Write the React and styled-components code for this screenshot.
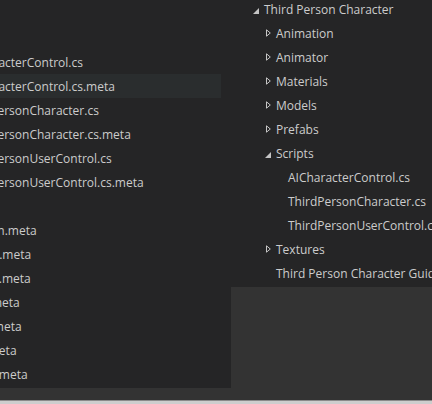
import React from 'react';
import styled, { createGlobalStyle } from 'styled-components';

const GlobalStyle = createGlobalStyle`
  html, body {
    margin: 0;
    padding: 0;
    background: #333333;
  }
  body {
    font-family: "Open Sans", "Noto Sans", sans-serif;
    font-size: 12px;
    color: #cccccc;
  }
`;

const Page = styled.div`
  width: 432px;
  height: 404px;
  overflow: hidden;
  display: flex;
  flex-direction: column;
  background: #333333;
`;

const Desktop = styled.div`
  flex: 1;
  display: flex;
  align-items: flex-start;
`;

const Strip = styled.div`
  height: 3px;
  border-top: 1px solid #8a8a8a;
  background: #cdcdcd;
`;

const FilePanel = styled.div`
  width: 231px;
  height: 388px;
  box-sizing: border-box;
  padding: 2px 10px 0 0;
  background: #252526;
  overflow: hidden;
`;

const FileRow = styled.div`
  height: 24px;
  display: flex;
  align-items: center;
  white-space: nowrap;
  background: ${props => (props.selected ? '#2a2d2e' : 'transparent')};
`;

const FileName = styled.span`
  margin-left: ${props => props.indent}px;
`;

const TreePanel = styled.div`
  width: 201px;
  height: 287px;
  background: #252526;
  overflow: hidden;
`;

const Tree = styled.div`
  margin-top: -3px;
`;

const TreeRow = styled.div`
  height: 24px;
  display: flex;
  align-items: center;
  white-space: nowrap;
  padding-left: ${props => 17 + props.level * 12}px;
`;

const Twisty = styled.span`
  width: 16px;
  height: 24px;
  flex: none;
  display: flex;
  align-items: center;
  justify-content: center;
`;

const Label = styled.span`
  overflow: visible;
`;

const Expanded = () => (
  <svg width="6" height="6" viewBox="0 0 6 6" style={{ marginTop: 3 }}>
    <path d="M6 0 L6 6 L0 6 Z" fill="#c5c5c5" />
  </svg>
);

const Collapsed = () => (
  <svg width="5" height="8" viewBox="0 0 5 8">
    <path d="M0.5 0.8 L4.3 4 L0.5 7.2 Z" fill="none" stroke="#c5c5c5" strokeWidth="1" />
  </svg>
);

// the file list belongs to a window that runs off the left edge,
// so names start left of the visible area
const files = [
  { name: '', indent: 0 },
  { name: '', indent: 0 },
  { name: 'AICharacterControl.cs', indent: -39 },
  { name: 'AICharacterControl.cs.meta', indent: -39, selected: true },
  { name: 'ThirdPersonCharacter.cs', indent: -39 },
  { name: 'ThirdPersonCharacter.cs.meta', indent: -39 },
  { name: 'ThirdPersonUserControl.cs', indent: -39 },
  { name: 'ThirdPersonUserControl.cs.meta', indent: -39 },
  { name: '', indent: 0 },
  { name: 'Animation.meta', indent: -53 },
  { name: 'Animator.meta', indent: -53 },
  { name: 'Materials.meta', indent: -53 },
  { name: 'Models.meta', indent: -53 },
  { name: 'Prefabs.meta', indent: -53 },
  { name: 'Scripts.meta', indent: -53 },
  { name: 'Textures.meta', indent: -53 },
];

const tree = [
  { name: 'Third Person Character', level: 0, open: true },
  { name: 'Animation', level: 1, open: false },
  { name: 'Animator', level: 1, open: false },
  { name: 'Materials', level: 1, open: false },
  { name: 'Models', level: 1, open: false },
  { name: 'Prefabs', level: 1, open: false },
  { name: 'Scripts', level: 1, open: true },
  { name: 'AICharacterControl.cs', level: 2 },
  { name: 'ThirdPersonCharacter.cs', level: 2 },
  { name: 'ThirdPersonUserControl.cs', level: 2 },
  { name: 'Textures', level: 1, open: false },
  { name: 'Third Person Character Guide.pdf', level: 1 },
];

export default function App() {
  return (
    <Page>
      <GlobalStyle />
      <Desktop>
        <FilePanel>
          {files.map((f, i) => (
            <FileRow key={i} selected={f.selected}>
              <FileName indent={f.indent}>{f.name}</FileName>
            </FileRow>
          ))}
        </FilePanel>
        <TreePanel>
          <Tree>
            {tree.map(item => (
              <TreeRow key={item.name} level={item.level}>
                <Twisty>
                  {item.open === true && <Expanded />}
                  {item.open === false && <Collapsed />}
                </Twisty>
                <Label>{item.name}</Label>
              </TreeRow>
            ))}
          </Tree>
        </TreePanel>
      </Desktop>
      <Strip />
    </Page>
  );
}
